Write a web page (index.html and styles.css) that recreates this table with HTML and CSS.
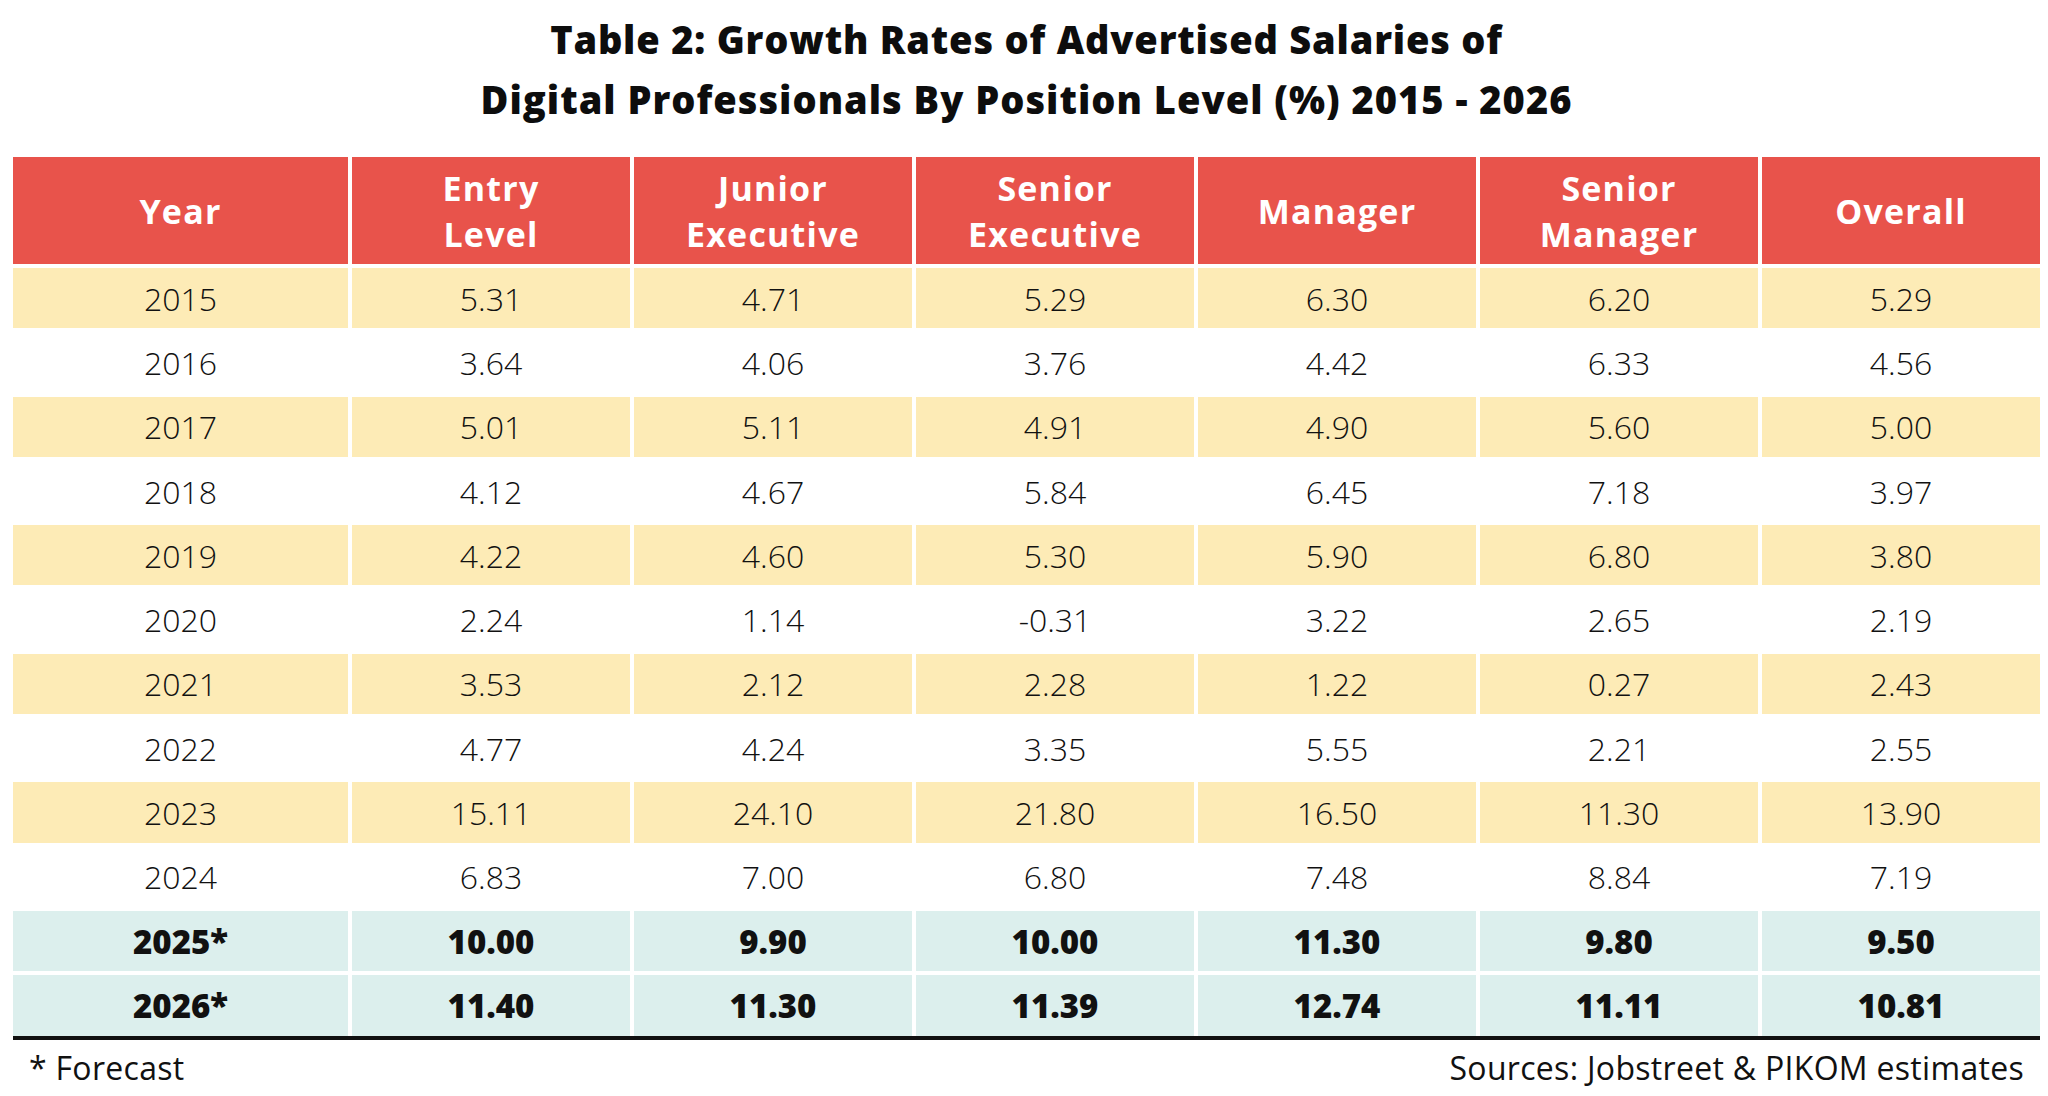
FILE: index.html
```html
<!DOCTYPE html>
<html lang="en">
<head>
<meta charset="utf-8">
<title>Table 2</title>
<link rel="stylesheet" href="styles.css">
</head>
<body>
<div class="page">
  <h1 class="title"><span class="t1">Table 2: Growth Rates of Advertised Salaries of</span><br><span class="t2">Digital Professionals By Position Level (%) 2015 - 2026</span></h1>
  <div class="tbl">
    <div class="row head">
      <div class="cell">Year</div>
      <div class="cell">Entry<br>Level</div>
      <div class="cell">Junior<br>Executive</div>
      <div class="cell">Senior<br>Executive</div>
      <div class="cell">Manager</div>
      <div class="cell">Senior<br>Manager</div>
      <div class="cell">Overall</div>
    </div>
    <div class="row odd"><div class="cell">2015</div><div class="cell">5.31</div><div class="cell">4.71</div><div class="cell">5.29</div><div class="cell">6.30</div><div class="cell">6.20</div><div class="cell">5.29</div></div>
    <div class="row even"><div class="cell">2016</div><div class="cell">3.64</div><div class="cell">4.06</div><div class="cell">3.76</div><div class="cell">4.42</div><div class="cell">6.33</div><div class="cell">4.56</div></div>
    <div class="row odd"><div class="cell">2017</div><div class="cell">5.01</div><div class="cell">5.11</div><div class="cell">4.91</div><div class="cell">4.90</div><div class="cell">5.60</div><div class="cell">5.00</div></div>
    <div class="row even"><div class="cell">2018</div><div class="cell">4.12</div><div class="cell">4.67</div><div class="cell">5.84</div><div class="cell">6.45</div><div class="cell">7.18</div><div class="cell">3.97</div></div>
    <div class="row odd"><div class="cell">2019</div><div class="cell">4.22</div><div class="cell">4.60</div><div class="cell">5.30</div><div class="cell">5.90</div><div class="cell">6.80</div><div class="cell">3.80</div></div>
    <div class="row even"><div class="cell">2020</div><div class="cell">2.24</div><div class="cell">1.14</div><div class="cell">-0.31</div><div class="cell">3.22</div><div class="cell">2.65</div><div class="cell">2.19</div></div>
    <div class="row odd"><div class="cell">2021</div><div class="cell">3.53</div><div class="cell">2.12</div><div class="cell">2.28</div><div class="cell">1.22</div><div class="cell">0.27</div><div class="cell">2.43</div></div>
    <div class="row even"><div class="cell">2022</div><div class="cell">4.77</div><div class="cell">4.24</div><div class="cell">3.35</div><div class="cell">5.55</div><div class="cell">2.21</div><div class="cell">2.55</div></div>
    <div class="row odd"><div class="cell">2023</div><div class="cell">15.11</div><div class="cell">24.10</div><div class="cell">21.80</div><div class="cell">16.50</div><div class="cell">11.30</div><div class="cell">13.90</div></div>
    <div class="row even"><div class="cell">2024</div><div class="cell">6.83</div><div class="cell">7.00</div><div class="cell">6.80</div><div class="cell">7.48</div><div class="cell">8.84</div><div class="cell">7.19</div></div>
    <div class="row fc"><div class="cell">2025*</div><div class="cell">10.00</div><div class="cell">9.90</div><div class="cell">10.00</div><div class="cell">11.30</div><div class="cell">9.80</div><div class="cell">9.50</div></div>
    <div class="row fc"><div class="cell">2026*</div><div class="cell">11.40</div><div class="cell">11.30</div><div class="cell">11.39</div><div class="cell">12.74</div><div class="cell">11.11</div><div class="cell">10.81</div></div>
  </div>
  <div class="foot">
    <span>* Forecast</span>
    <span>Sources: Jobstreet &amp; PIKOM estimates</span>
  </div>
</div>
</body>
</html>
```

FILE: styles.css
```css
html, body {
  margin: 0;
  padding: 0;
  background: #ffffff;
}

body {
  font-family: "Open Sans", "Noto Sans", sans-serif;
  color: #111111;
  width: 2048px;
}

.page {
  padding: 9px 8px 0 13px;
}

.title {
  margin: 0;
  text-align: center;
  font-size: 38px;
  line-height: 60px;
  font-weight: 800;
  color: #0d0d0d;
}

.t1 {
  letter-spacing: 0.8px;
}

.t2 {
  letter-spacing: 1px;
}

.tbl {
  margin-top: 28px;
  width: 2027px;
  display: flex;
  flex-direction: column;
  gap: 4px;
  border-bottom: 4px solid #111111;
}

.row {
  display: grid;
  grid-template-columns: 335px repeat(6, 1fr);
  column-gap: 4px;
  height: 60.3px;
}

.cell {
  display: flex;
  align-items: center;
  justify-content: center;
  text-align: center;
  font-size: 32px;
  font-weight: 300;
}

.head {
  height: 107px;
}

.head .cell {
  background: #e8534b;
  color: #ffffff;
  font-weight: 700;
  font-size: 34px;
  line-height: 46px;
  letter-spacing: 1.2px;
}

.odd .cell {
  background: #fdebb6;
}

.even .cell {
  background: #ffffff;
}

.fc .cell {
  background: #dcefed;
  font-weight: 800;
  font-size: 33px;
}

.foot {
  width: 2027px;
  box-sizing: border-box;
  display: flex;
  justify-content: space-between;
  padding: 6px 16px 0 16px;
  font-size: 32px;
  line-height: 44px;
  font-weight: 400;
  letter-spacing: 0.3px;
}
```
